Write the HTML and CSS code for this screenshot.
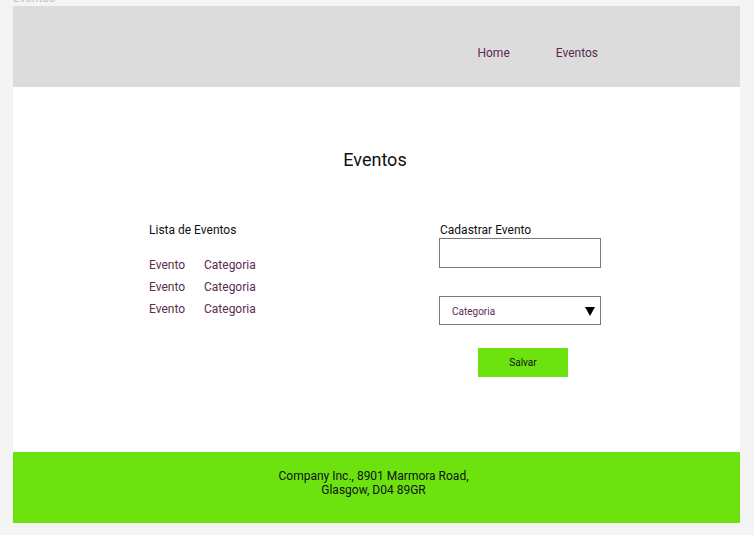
FILE: index.html
```html
<!DOCTYPE html>
<html>
<head>
<meta charset="utf-8">
<link rel="stylesheet" href="styles.css">
</head>
<body>
<div class="label">Eventos</div>
<div class="frame">
  <header class="header">
    <nav class="nav">
      <a class="nav-link">Home</a>
      <a class="nav-link">Eventos</a>
    </nav>
  </header>
  <main class="main">
    <h1 class="title">Eventos</h1>
    <div class="columns">
      <section class="list">
        <h2 class="section-title">Lista de Eventos</h2>
        <div class="rows">
          <div class="row"><span class="ev">Evento</span><span>Categoria</span></div>
          <div class="row"><span class="ev">Evento</span><span>Categoria</span></div>
          <div class="row"><span class="ev">Evento</span><span>Categoria</span></div>
        </div>
      </section>
      <section class="form">
        <h2 class="section-title">Cadastrar Evento</h2>
        <div class="input"></div>
        <div class="select"><span>Categoria</span><span class="arrow"></span></div>
        <div class="btn-wrap"><div class="btn">Salvar</div></div>
      </section>
    </div>
  </main>
  <footer class="footer">
    <p>Company Inc., 8901 Marmora Road,<br>Glasgow, D04 89GR</p>
  </footer>
</div>
</body>
</html>
```
FILE: styles.css
```css
* { box-sizing: border-box; }
html, body { margin: 0; padding: 0; }
body {
  background: #f4f4f4;
  font-family: Roboto, "Liberation Sans", sans-serif;
  height: 535px;
  overflow: hidden;
}
.label {
  margin: -9px 0 0 13px;
  height: 15px;
  font-size: 12px;
  line-height: 15px;
  color: #c4c4c4;
}
.frame {
  margin-left: 13px;
  width: 727px;
  background: #fff;
}
.header {
  height: 81px;
  background: #dcdcdc;
  display: flex;
  justify-content: flex-end;
}
.nav {
  display: flex;
  gap: 46px;
  padding: 40px 142px 0 0;
}
.nav-link {
  font-size: 12px;
  line-height: 15px;
  color: #5b2b50;
}
.main {
  height: 365px;
  padding-top: 62px;
}
.title {
  margin: 0;
  text-align: center;
  font-weight: 400;
  font-size: 18px;
  line-height: 22px;
  color: #111;
  padding-right: 3px;
}
.columns {
  display: flex;
  padding: 52px 0 0 136px;
}
.list { width: 290px; }
.section-title {
  margin: 0;
  font-weight: 400;
  font-size: 12px;
  line-height: 15px;
  color: #111;
}
.rows { margin-top: 20px; }
.row {
  display: flex;
  font-size: 12px;
  line-height: 15px;
  height: 22px;
  color: #5b2b50;
}
.ev { width: 55px; }
.form { width: 162px; }
.form .section-title { padding-left: 1px; }
.input {
  height: 30px;
  border: 1px solid #7a7a7a;
}
.select {
  margin-top: 28px;
  height: 29px;
  border: 1px solid #7a7a7a;
  display: flex;
  align-items: center;
  justify-content: space-between;
  padding: 2px 5px 0 12px;
  font-size: 10px;
  color: #5b2b50;
}
.arrow {
  width: 0;
  height: 0;
  border-left: 5px solid transparent;
  border-right: 5px solid transparent;
  border-top: 9px solid #000;
}
.btn-wrap {
  display: flex;
  justify-content: flex-end;
  padding-right: 33px;
  margin-top: 23px;
}
.btn {
  width: 90px;
  height: 29px;
  background: #6ce30e;
  font-size: 10px;
  line-height: 29px;
  text-align: center;
  color: #111;
}
.footer {
  height: 71px;
  background: #6ce30e;
  display: flex;
  justify-content: center;
  padding-top: 17px;
}
.footer p {
  margin: 0;
  text-align: center;
  font-size: 12px;
  line-height: 14px;
  color: #111;
  padding-right: 6px;
}
```
